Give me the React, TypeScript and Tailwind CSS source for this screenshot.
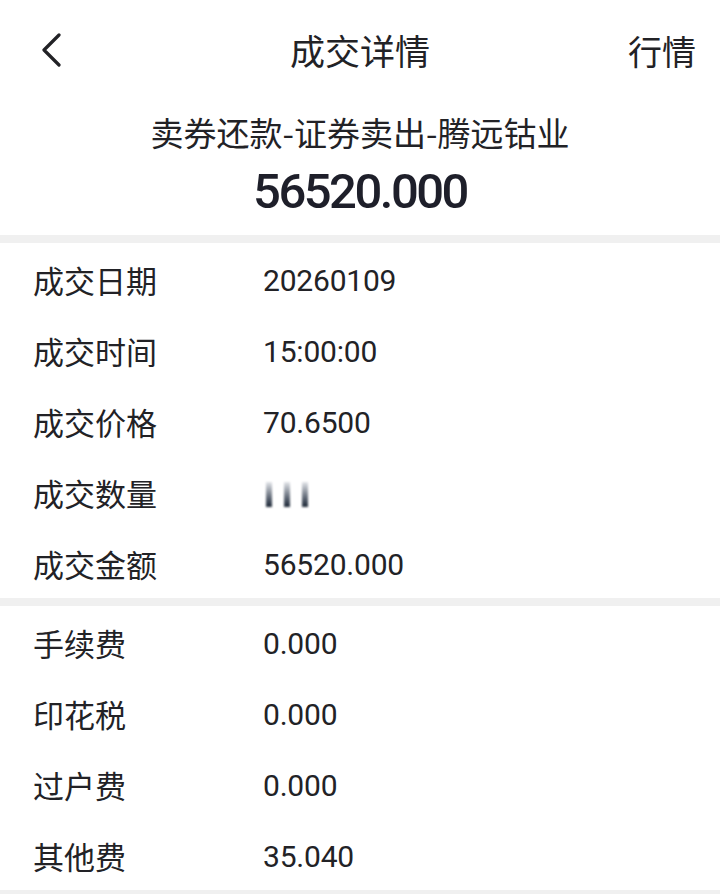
import React from 'react'

const cjk = { fontFamily: '"Noto Sans CJK SC", "Noto Sans", sans-serif' }
const num = { fontFamily: 'Roboto, "Noto Sans", sans-serif' }

interface Row {
  label: string
  value: string
  hidden?: boolean
}

const tradeRows: Row[] = [
  { label: '成交日期', value: '20260109' },
  { label: '成交时间', value: '15:00:00' },
  { label: '成交价格', value: '70.6500' },
  { label: '成交数量', value: '', hidden: true },
  { label: '成交金额', value: '56520.000' },
]

const feeRows: Row[] = [
  { label: '手续费', value: '0.000' },
  { label: '印花税', value: '0.000' },
  { label: '过户费', value: '0.000' },
  { label: '其他费', value: '35.040' },
]

function Masked() {
  // blurred quantity in the screenshot
  return (
    <div className="flex items-end gap-[12px] h-[26px] pl-[3px] blur-[1px]">
      <div className="w-[6px] h-[25px] bg-gradient-to-b from-gray-200 to-gray-800" />
      <div className="w-[6px] h-[25px] bg-gradient-to-b from-gray-200 to-gray-800" />
      <div className="w-[6px] h-[25px] bg-gradient-to-b from-gray-200 to-gray-800" />
    </div>
  )
}

function InfoRow({ row }: { row: Row }) {
  return (
    <div className="flex items-center h-[71px] pl-[33px] pt-[4px]">
      <div className="w-[230px] text-[31px] text-[#222226]" style={cjk}>
        {row.label}
      </div>
      {row.hidden ? (
        <Masked />
      ) : (
        <div className="text-[30px] tracking-[-0.2px] text-[#222226]" style={num}>
          {row.value}
        </div>
      )}
    </div>
  )
}

export default function App() {
  return (
    <div className="w-[720px] h-[894px] bg-white overflow-hidden">
      {/* Header */}
      <div className="grid grid-cols-3 items-center h-[100px]">
        <div className="pl-[40px]">
          <svg width="24" height="34" viewBox="0 0 24 34" fill="none">
            <path d="M19 2 L4 17 L19 32" stroke="#222226" strokeWidth="3.2" strokeLinecap="round" strokeLinejoin="round" />
          </svg>
        </div>
        <div className="text-center text-[35px] text-[#222226]" style={cjk}>
          成交详情
        </div>
        <div className="text-right pr-[24px] text-[34px] text-[#222226]" style={cjk}>
          行情
        </div>
      </div>

      {/* Summary */}
      <div className="flex flex-col items-center pt-[12px] h-[135px]">
        <div className="text-[33px] leading-[40px] text-[#222226]" style={cjk}>
          卖券还款-证券卖出-腾远钴业
        </div>
        <div className="text-[49px] leading-[56px] mt-[12px] font-medium tracking-[-2.5px] text-[#1e1f2a]" style={num}>
          56520.000
        </div>
      </div>

      <div className="h-[8px] bg-[#f0f0f0]" />

      <div>
        {tradeRows.map(r => (
          <InfoRow key={r.label} row={r} />
        ))}
      </div>

      <div className="h-[8px] bg-[#f0f0f0]" />

      <div>
        {feeRows.map(r => (
          <InfoRow key={r.label} row={r} />
        ))}
      </div>

      <div className="h-[8px] bg-[#f0f0f0]" />
    </div>
  )
}
